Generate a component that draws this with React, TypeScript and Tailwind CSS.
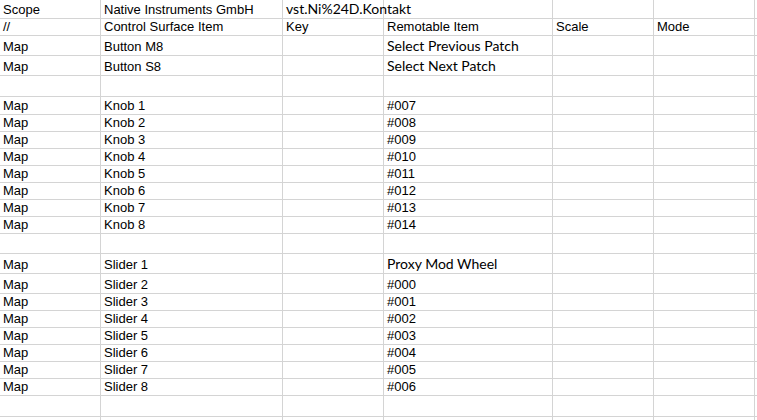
import React from "react";

type Cell = { text?: string; calibri?: boolean };
type Row = { h: string; cells: Cell[] };

const widths = [
  "w-[101px]",
  "w-[182px]",
  "w-[101px]",
  "w-[169px]",
  "w-[101px]",
  "w-[101px]",
];

const arial = "font-['Liberation_Sans',Arial,sans-serif] text-[13px] leading-[15px]";
const calibri = "font-['Lato','Open_Sans',sans-serif] text-[14px] leading-[16px]";

function map(b: string, d: string, dCalibri = false): Cell[] {
  return [{ text: "Map" }, { text: b }, {}, { text: d, calibri: dCalibri }, {}, {}];
}

const blank: Cell[] = [{}, {}, {}, {}, {}, {}];

const rows: Row[] = [
  {
    h: "h-[19px]",
    cells: [
      { text: "Scope" },
      { text: "Native Instruments GmbH" },
      { text: "vst.Ni%24D.Kontakt", calibri: true },
      {},
      {},
      {},
    ],
  },
  {
    h: "h-[17px]",
    cells: [
      { text: "//" },
      { text: "Control Surface Item" },
      { text: "Key" },
      { text: "Remotable Item" },
      { text: "Scale" },
      { text: "Mode" },
    ],
  },
  { h: "h-[20px]", cells: map("Button M8", "Select Previous Patch", true) },
  { h: "h-[20px]", cells: map("Button S8", "Select Next Patch", true) },
  { h: "h-[21px]", cells: blank },
  { h: "h-[18px]", cells: map("Knob 1", "#007") },
  ...[2, 3, 4, 5, 6, 7, 8].map((n) => ({
    h: "h-[17px]",
    cells: map(`Knob ${n}`, `#0${String(n + 6).padStart(2, "0")}`),
  })),
  { h: "h-[20px]", cells: blank },
  { h: "h-[20px]", cells: map("Slider 1", "Proxy Mod Wheel", true) },
  { h: "h-[20px]", cells: map("Slider 2", "#000") },
  ...[3, 4, 5, 6, 7, 8].map((n) => ({
    h: "h-[17px]",
    cells: map(`Slider ${n}`, `#00${n - 2}`),
  })),
  { h: "h-[21px]", cells: blank },
  { h: "h-[20px]", cells: blank },
];

export default function App() {
  return (
    <div className="w-[757px] h-[420px] overflow-hidden bg-white text-black">
      {rows.map((row, i) => (
        <div key={i} className={`flex ${row.h}`}>
          {row.cells.map((cell, j) => (
            <div
              key={j}
              className={`${widths[j]} shrink-0 flex items-end pl-[3px] pb-[1px] border-b border-r border-[#d4d4d4] whitespace-nowrap overflow-visible ${
                cell.calibri ? calibri : arial
              }`}
            >
              {cell.text}
            </div>
          ))}
          <div className="flex-1 border-b border-[#d4d4d4]" />
        </div>
      ))}
    </div>
  );
}
